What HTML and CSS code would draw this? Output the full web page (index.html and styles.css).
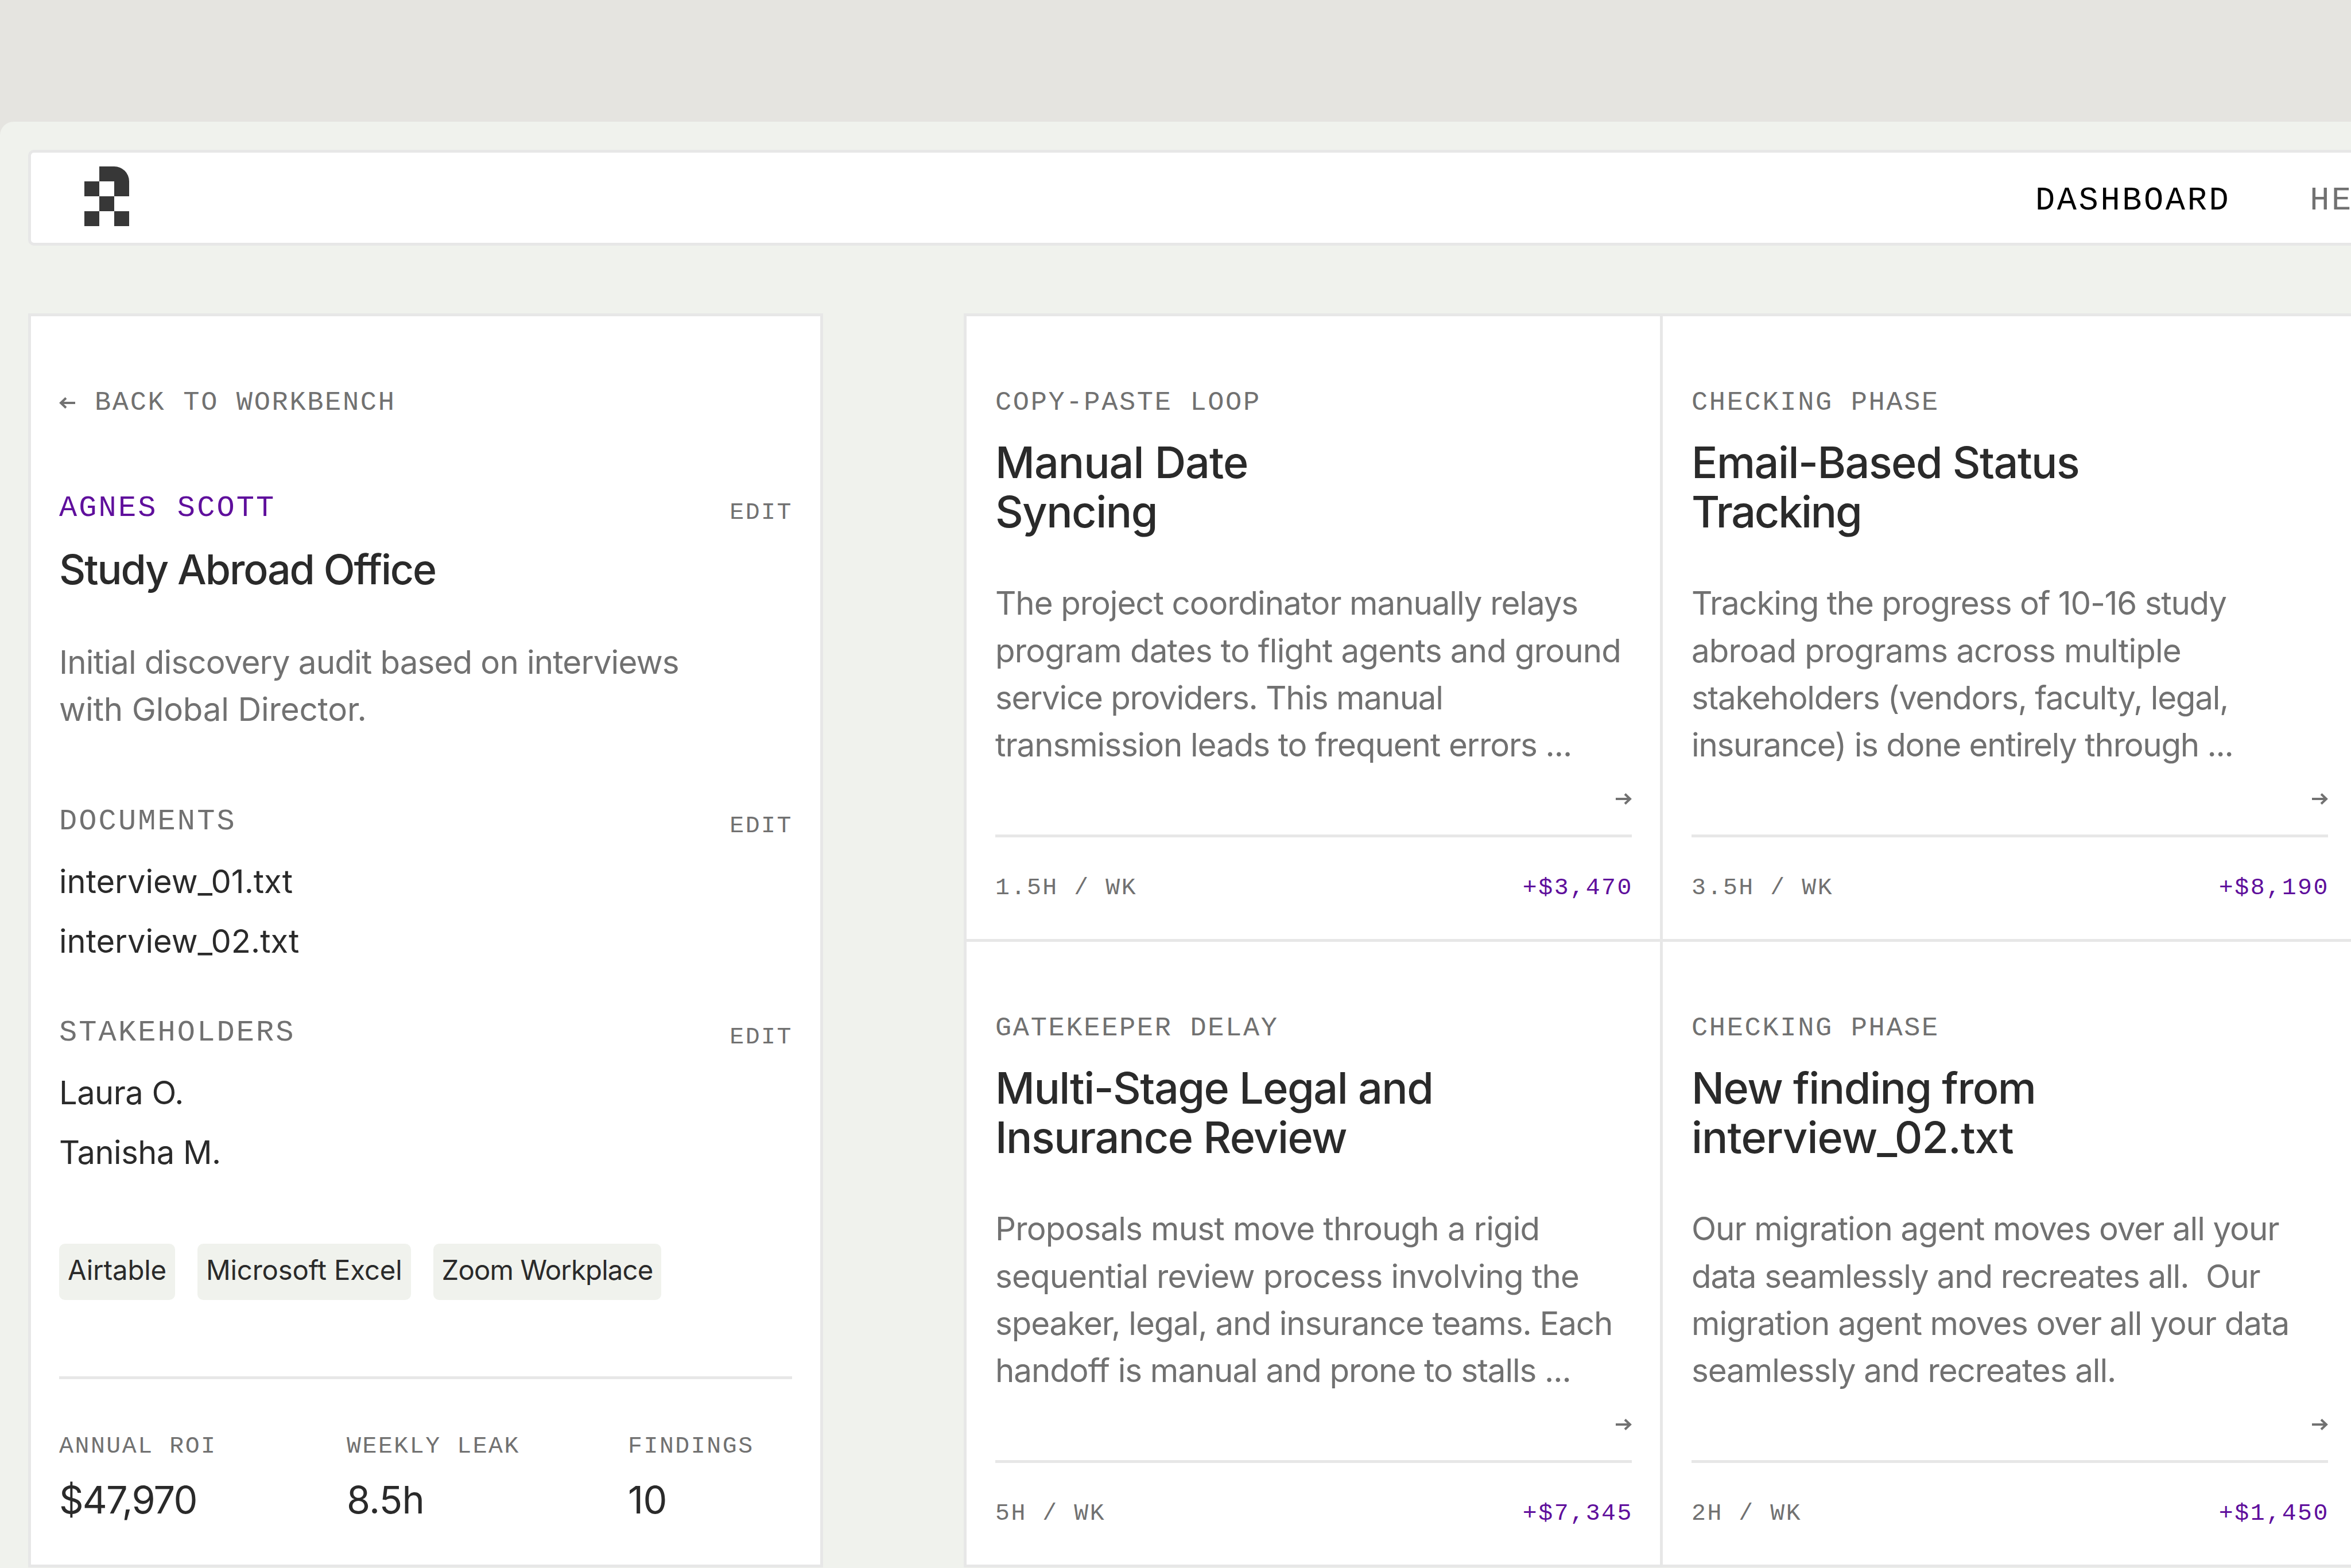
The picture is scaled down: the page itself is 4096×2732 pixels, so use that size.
FILE: index.html
```html
<!DOCTYPE html>
<html lang="en">
<head>
    <meta charset="UTF-8">
    <title>Study Abroad Office</title>
    <link rel="stylesheet" href="styles.css">
</head>
<body>
    <div class="app">
        <header class="navbar">
            <svg class="logo" viewBox="0 0 3 4">
                <path d="M1 0h1a1 1 0 0 1 1 1v1h-1v-1h-1z M0 1h1v1h-1z M1 2h1v1h-1z M0 3h1v1h-1z M2 3h1v1h-1z"/>
            </svg>
            <nav class="menu">
                <a class="active">DASHBOARD</a>
                <a>HELP</a>
            </nav>
        </header>

        <div class="layout">
            <!-- Project summary -->
            <aside class="sidebar">
                <a class="back">
                    <svg class="arrow" viewBox="0 0 28 20"><path d="M28 10H3M12 1.5L3 10l9 8.5"/></svg>
                    <span>BACK TO WORKBENCH</span>
                </a>

                <div class="row client">
                    <span class="name">AGNES SCOTT</span>
                    <a class="edit">EDIT</a>
                </div>
                <h1>Study Abroad Office</h1>
                <p class="summary"><span class="loose">Initial discovery audit based on interviews</span><br><span class="wide">with Global Director.</span></p>

                <div class="row documents">
                    <span>DOCUMENTS</span>
                    <a class="edit">EDIT</a>
                </div>
                <ul class="list">
                    <li>interview_01.txt</li>
                    <li>interview_02.txt</li>
                </ul>

                <div class="row stakeholders">
                    <span>STAKEHOLDERS</span>
                    <a class="edit">EDIT</a>
                </div>
                <ul class="list people">
                    <li>Laura O.</li>
                    <li>Tanisha M.</li>
                </ul>

                <div class="tools">
                    <span class="chip">Airtable</span>
                    <span class="chip">Microsoft Excel</span>
                    <span class="chip long">Zoom Workplace</span>
                </div>

                <div class="stats">
                    <div><span class="label">ANNUAL ROI</span><span class="value money">$47,970</span></div>
                    <div><span class="label">WEEKLY LEAK</span><span class="value">8.5h</span></div>
                    <div><span class="label">FINDINGS</span><span class="value">10</span></div>
                </div>
            </aside>

            <!-- Findings -->
            <main class="findings">
                <article class="card">
                    <div class="tag">COPY-PASTE LOOP</div>
                    <h2><span class="loose">Manual Date</span><br>Syncing</h2>
                    <p>The project coordinator manually relays<br><span class="loose">program dates to flight agents and ground</span><br><span class="tight">service providers. This manual</span><br>transmission leads to frequent errors ...</p>
                    <svg class="arrow" viewBox="0 0 28 20"><path d="M0 10H25M16 1.5L25 10l-9 8.5"/></svg>
                    <footer><span>1.5H / WK</span><span class="gain">+$3,470</span></footer>
                </article>
                <article class="card">
                    <div class="tag">CHECKING PHASE</div>
                    <h2>Email-Based Status<br><span class="tight">Tracking</span></h2>
                    <p><span class="tight">Tracking the progress of 10-16 study</span><br><span class="loose">abroad programs across multiple</span><br><span class="tight">stakeholders (vendors, faculty, legal,</span><br><span class="tight">insurance) is done entirely through ...</span></p>
                    <svg class="arrow" viewBox="0 0 28 20"><path d="M0 10H25M16 1.5L25 10l-9 8.5"/></svg>
                    <footer><span>3.5H / WK</span><span class="gain">+$8,190</span></footer>
                </article>
                <article class="card">
                    <div class="tag">GATEKEEPER DELAY</div>
                    <h2>Multi-Stage Legal and<br>Insurance Review</h2>
                    <p><span class="loose">Proposals must move through a rigid</span><br><span class="loose">sequential review process involving the</span><br>speaker, legal, and insurance teams. Each<br>handoff is manual and prone to stalls ...</p>
                    <svg class="arrow" viewBox="0 0 28 20"><path d="M0 10H25M16 1.5L25 10l-9 8.5"/></svg>
                    <footer><span>5H / WK</span><span class="gain">+$7,345</span></footer>
                </article>
                <article class="card">
                    <div class="tag">CHECKING PHASE</div>
                    <h2>New finding from<br><span class="loose">interview_02.txt</span></h2>
                    <p>Our migration agent moves over all your<br>data seamlessly and recreates all.&nbsp; Our<br>migration agent moves over all your data<br>seamlessly and recreates all.</p>
                    <svg class="arrow" viewBox="0 0 28 20"><path d="M0 10H25M16 1.5L25 10l-9 8.5"/></svg>
                    <footer><span>2H / WK</span><span class="gain">+$1,450</span></footer>
                </article>
            </main>
        </div>
    </div>
</body>
</html>
```
FILE: styles.css
```css
* {
    margin: 0;
    padding: 0;
    box-sizing: border-box;
}

body {
    height: 2732px;
    padding-top: 212px;
    overflow: hidden;
    background: #e5e4e0;
    color: #2a2a2a;
    font-family: Inter, "Liberation Sans", sans-serif;
    white-space: nowrap;
}

.app {
    height: 2520px;
    padding: 49px 0 0 49px;
    background: #f0f2ed;
    border-radius: 24px 0 0 0;
}

/* Navbar */
.navbar {
    display: flex;
    justify-content: space-between;
    width: 4200px;
    height: 167px;
    padding: 24px 0 0 93px;
    background: #fff;
    border: 5px solid #e7e7e7;
    border-radius: 10px;
}

.logo {
    width: 78px;
    height: 104px;
    fill: #373737;
}

.menu {
    display: flex;
    gap: 138px;
    width: 698px;
    font-family: "Liberation Mono", monospace;
    font-size: 57px;
    line-height: 121px;
    letter-spacing: 3.6px;
    color: #717171;
}

.menu .active {
    color: #000;
}

.layout {
    display: flex;
    gap: 245px;
    margin-top: 118px;
}

/* Sidebar */
.sidebar {
    flex: none;
    width: 1385px;
    height: 2185px;
    padding: 121px 49px 0;
    background: #fff;
    border: 5px solid #e7e7e7;
}

.back,
.tag {
    display: flex;
    align-items: center;
    font-family: "Liberation Mono", monospace;
    font-size: 47px;
    line-height: 60px;
    letter-spacing: 2.65px;
    color: #717171;
}

.arrow {
    width: 28px;
    height: 20px;
    fill: none;
    stroke: #717171;
    stroke-width: 4;
}

.back .arrow {
    margin-right: 34px;
}

.row {
    display: flex;
    justify-content: space-between;
    font-family: "Liberation Mono", monospace;
    font-size: 52px;
    line-height: 60px;
    letter-spacing: 3.1px;
    color: #717171;
}

.edit {
    margin: 15px -1px 0 0;
    font-size: 41.5px;
    line-height: 44px;
    letter-spacing: 2.55px;
}

.client {
    margin-top: 124px;
}

.name,
.gain {
    color: #5f0f9c;
}

h1 {
    margin-top: 33px;
    font-size: 71.6px;
    line-height: 86px;
    font-weight: 500;
    letter-spacing: -2.1px;
}

p {
    font-size: 56.5px;
    line-height: 82.1px;
    letter-spacing: -1.1px;
    color: #717171;
}

p .loose {
    letter-spacing: -0.86px;
}

p .tight {
    letter-spacing: -1.28px;
}

p .wide {
    letter-spacing: -0.2px;
}

.summary {
    margin-top: 78px;
}

.documents {
    margin-top: 125px;
}

.stakeholders {
    margin-top: 78px;
}

.list {
    margin-top: 23px;
    list-style: none;
    font-size: 56px;
    line-height: 103.6px;
}

.people {
    letter-spacing: -0.5px;
}

.tools {
    display: flex;
    gap: 39px;
    margin-top: 106px;
}

.chip {
    padding: 0 15px 6px;
    background: #f0f2ed;
    border-radius: 10px;
    font-size: 47.3px;
    line-height: 92.4px;
    letter-spacing: -0.15px;
}

.chip.long {
    letter-spacing: -0.85px;
}

.stats {
    display: grid;
    grid-template-columns: 501px 490px 1fr;
    margin-top: 133px;
    padding-top: 92px;
    border-top: 5px solid #e7e7e7;
}

.label {
    display: block;
    font-family: "Liberation Mono", monospace;
    font-size: 41.5px;
    line-height: 50px;
    letter-spacing: 2.55px;
    color: #717171;
}

.value {
    display: block;
    margin-top: 28px;
    font-size: 66.5px;
    line-height: 80px;
    letter-spacing: -0.6px;
}

.value.money {
    letter-spacing: -1.8px;
}

/* Findings grid */
.findings {
    flex: none;
    display: grid;
    grid-template-columns: 1213px 1213px;
    grid-auto-rows: 1090px;
    border-bottom: 5px solid #e7e7e7;
}

.card {
    display: flex;
    flex-direction: column;
    padding: 121px 49px 0 50px;
    background: #fff;
    border: 5px solid #e7e7e7;
    border-width: 5px 0 0 5px;
}

h2 {
    margin-top: 31px;
    font-size: 75.5px;
    line-height: 86.2px;
    font-weight: 500;
    letter-spacing: -1.5px;
}

h2 .loose {
    letter-spacing: -1px;
}

h2 .tight {
    letter-spacing: -2.3px;
}

.card p {
    margin-top: 75px;
}

.card .arrow {
    align-self: flex-end;
    margin-top: 43px;
}

.card footer {
    display: flex;
    justify-content: space-between;
    margin-top: 52px;
    padding-top: 63px;
    border-top: 5px solid #e7e7e7;
    font-family: "Liberation Mono", monospace;
    font-size: 41.5px;
    line-height: 50px;
    letter-spacing: 2.55px;
    color: #717171;
}

.card .gain {
    margin-right: -2px;
    color: #5f0f9c;
}
```
